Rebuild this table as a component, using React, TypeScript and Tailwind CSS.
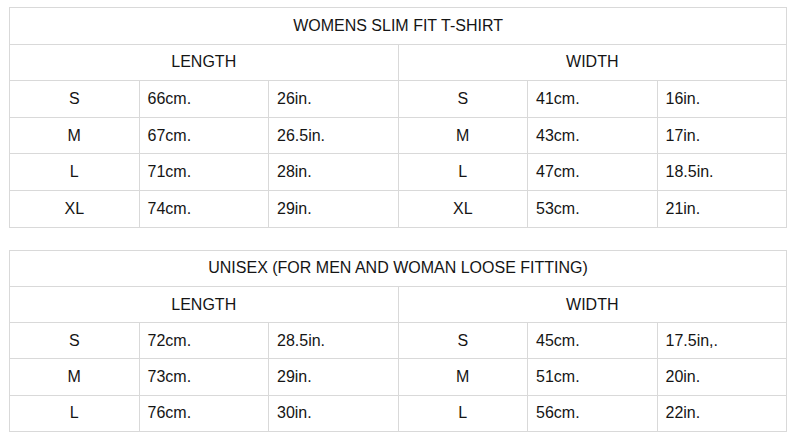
const font = { fontFamily: '"Liberation Sans", Arial, sans-serif' };

interface SizeRow {
  size: string;
  lenCm: string;
  lenIn: string;
  widCm: string;
  widIn: string;
}

const womens: SizeRow[] = [
  { size: "S", lenCm: "66cm.", lenIn: "26in.", widCm: "41cm.", widIn: "16in." },
  { size: "M", lenCm: "67cm.", lenIn: "26.5in.", widCm: "43cm.", widIn: "17in." },
  { size: "L", lenCm: "71cm.", lenIn: "28in.", widCm: "47cm.", widIn: "18.5in." },
  { size: "XL", lenCm: "74cm.", lenIn: "29in.", widCm: "53cm.", widIn: "21in." },
];

const unisex: SizeRow[] = [
  { size: "S", lenCm: "72cm.", lenIn: "28.5in.", widCm: "45cm.", widIn: "17.5in,." },
  { size: "M", lenCm: "73cm.", lenIn: "29in.", widCm: "51cm.", widIn: "20in." },
  { size: "L", lenCm: "76cm.", lenIn: "30in.", widCm: "56cm.", widIn: "22in." },
];

function SizeTable({ title, rows, rowH }: { title: string; rows: SizeRow[]; rowH: string }) {
  const cell = `border border-[#d9d9d9] ${rowH} p-0 font-normal`;
  return (
    <table className="w-[777px] table-fixed border-collapse text-[16px] text-[#151515]" style={font}>
      <colgroup>
        {[0, 1, 2, 3, 4, 5].map((i) => (
          <col key={i} className="w-[129.5px]" />
        ))}
      </colgroup>
      <tbody>
        <tr>
          <td colSpan={6} className={`${cell} text-center`}>{title}</td>
        </tr>
        <tr>
          <td colSpan={3} className={`${cell} text-center`}>LENGTH</td>
          <td colSpan={3} className={`${cell} text-center`}>WIDTH</td>
        </tr>
        {rows.map((r) => (
          <tr key={r.size}>
            <td className={`${cell} text-center`}>{r.size}</td>
            <td className={`${cell} pl-2`}>{r.lenCm}</td>
            <td className={`${cell} pl-2`}>{r.lenIn}</td>
            <td className={`${cell} text-center`}>{r.size}</td>
            <td className={`${cell} pl-2`}>{r.widCm}</td>
            <td className={`${cell} pl-2`}>{r.widIn}</td>
          </tr>
        ))}
      </tbody>
    </table>
  );
}

export default function App() {
  return (
    <div className="w-[794px] h-[442px] bg-white pl-[9px] pt-[7px] flex flex-col gap-[22px] overflow-hidden">
      <SizeTable title="WOMENS SLIM FIT T-SHIRT" rows={womens} rowH="h-[36.6px]" />
      <SizeTable title="UNISEX (FOR MEN AND WOMAN LOOSE FITTING)" rows={unisex} rowH="h-[36.3px]" />
    </div>
  );
}
